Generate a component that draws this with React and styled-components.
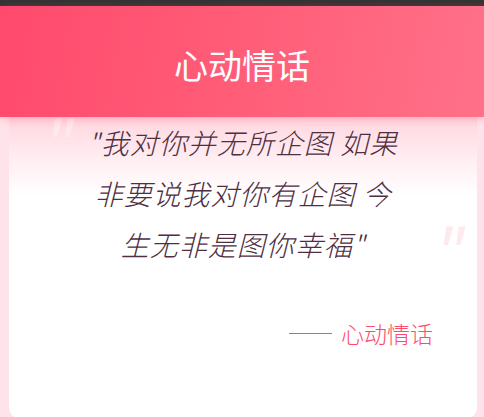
import React from "react";
import styled, { createGlobalStyle } from "styled-components";

const Global = createGlobalStyle`
  html, body { margin: 0; padding: 0; }
  body {
    width: 484px;
    height: 417px;
    overflow: hidden;
    background: #ffe3ea;
    font-family: "Noto Sans CJK SC", "Noto Sans", sans-serif;
  }
`;

const Page = styled.div`
  display: flex;
  flex-direction: column;
  height: 417px;
`;

const StatusStrip = styled.div`
  height: 6px;
  background: #333333;
  flex: none;
`;

const Header = styled.header`
  position: relative;
  z-index: 2;
  flex: none;
  height: 111px;
  display: flex;
  align-items: center;
  justify-content: center;
  padding-top: 6px;
  box-sizing: border-box;
  background: linear-gradient(100deg, #ff4a6d 0%, #ff5d78 50%, #ff7189 100%);
  box-shadow: 0 2px 8px rgba(255, 80, 110, 0.35);
`;

const Title = styled.h1`
  margin: 0;
  font-size: 34px;
  font-weight: 400;
  color: #ffffff;
`;

const Card = styled.section`
  position: relative;
  z-index: 1;
  flex: none;
  height: 302px;
  margin: 0 7px 0 9px;
  border-radius: 0 0 12px 12px;
  background: linear-gradient(180deg, #ffd6df 0%, #ffeef2 14%, #ffffff 26%);
  display: flex;
  flex-direction: column;
  align-items: center;
  overflow: hidden;
`;

const QuoteMark = styled.span`
  position: absolute;
  left: ${(p) => p.$left}px;
  top: ${(p) => p.$top}px;
  font-size: 72px;
  line-height: 1;
  font-style: italic;
  color: #ffe9ee;
  font-family: "Noto Sans", sans-serif;
  pointer-events: none;
`;

const Quote = styled.p`
  position: relative;
  margin: 0;
  width: 318px;
  text-align: center;
  font-size: 28px;
  font-weight: 300;
  line-height: 51px;
  font-style: italic;
  color: #4e2f42;
  letter-spacing: 1px;
`;

const Signature = styled.div`
  align-self: flex-end;
  margin: 48px 44px 0 0;
  font-size: 23px;
  font-weight: 300;
  line-height: 30px;
  color: #ff4a6b;
  display: flex;
  align-items: center;
  gap: 9px;
`;

const Dash = styled.span`
  display: block;
  width: 43px;
  height: 1px;
  background: #ff4d6d;
`;

export default function App() {
  return (
    <>
      <Global />
      <Page>
        <StatusStrip />
        <Header>
          <Title>心动情话</Title>
        </Header>
        <Card>
          <QuoteMark $left={36} $top={-11}>"</QuoteMark>
          <QuoteMark $left={427} $top={97}>"</QuoteMark>
          <Quote>"我对你并无所企图 如果非要说我对你有企图 今生无非是图你幸福"</Quote>
          <Signature>
            <Dash />
            心动情话
          </Signature>
        </Card>
      </Page>
    </>
  );
}
